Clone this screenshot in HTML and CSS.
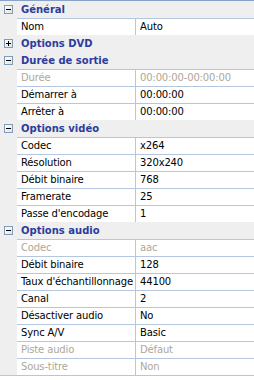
FILE: index.html
```html
<!DOCTYPE html>
<html lang="fr">
<head>
    <meta charset="UTF-8">
    <title>Propriétés</title>
    <link rel="stylesheet" href="styles.css">
</head>
<body>
    <div class="grid">
        <div class="cat">
            <div class="gutter"><span class="toggle minus"></span></div>
            <div class="cat-name">Général</div>
        </div>
        <div class="prop">
            <div class="gutter"></div>
            <div class="name">Nom</div>
            <div class="value">Auto</div>
        </div>

        <div class="cat">
            <div class="gutter"><span class="toggle plus"></span></div>
            <div class="cat-name">Options DVD</div>
        </div>

        <div class="cat">
            <div class="gutter"><span class="toggle minus"></span></div>
            <div class="cat-name">Durée de sortie</div>
        </div>
        <div class="prop off">
            <div class="gutter"></div>
            <div class="name">Durée</div>
            <div class="value">00:00:00-00:00:00</div>
        </div>
        <div class="prop">
            <div class="gutter"></div>
            <div class="name">Démarrer à</div>
            <div class="value">00:00:00</div>
        </div>
        <div class="prop">
            <div class="gutter"></div>
            <div class="name">Arrêter à</div>
            <div class="value">00:00:00</div>
        </div>

        <div class="cat">
            <div class="gutter"><span class="toggle minus"></span></div>
            <div class="cat-name">Options vidéo</div>
        </div>
        <div class="prop">
            <div class="gutter"></div>
            <div class="name">Codec</div>
            <div class="value">x264</div>
        </div>
        <div class="prop">
            <div class="gutter"></div>
            <div class="name">Résolution</div>
            <div class="value">320x240</div>
        </div>
        <div class="prop">
            <div class="gutter"></div>
            <div class="name">Débit binaire</div>
            <div class="value">768</div>
        </div>
        <div class="prop">
            <div class="gutter"></div>
            <div class="name">Framerate</div>
            <div class="value">25</div>
        </div>
        <div class="prop">
            <div class="gutter"></div>
            <div class="name">Passe d'encodage</div>
            <div class="value">1</div>
        </div>

        <div class="cat">
            <div class="gutter"><span class="toggle minus"></span></div>
            <div class="cat-name">Options audio</div>
        </div>
        <div class="prop off">
            <div class="gutter"></div>
            <div class="name">Codec</div>
            <div class="value">aac</div>
        </div>
        <div class="prop">
            <div class="gutter"></div>
            <div class="name">Débit binaire</div>
            <div class="value">128</div>
        </div>
        <div class="prop">
            <div class="gutter"></div>
            <div class="name">Taux d'échantillonnage</div>
            <div class="value">44100</div>
        </div>
        <div class="prop">
            <div class="gutter"></div>
            <div class="name">Canal</div>
            <div class="value">2</div>
        </div>
        <div class="prop">
            <div class="gutter"></div>
            <div class="name">Désactiver audio</div>
            <div class="value">No</div>
        </div>
        <div class="prop">
            <div class="gutter"></div>
            <div class="name">Sync A/V</div>
            <div class="value">Basic</div>
        </div>
        <div class="prop off">
            <div class="gutter"></div>
            <div class="name">Piste audio</div>
            <div class="value">Défaut</div>
        </div>
        <div class="prop off">
            <div class="gutter"></div>
            <div class="name">Sous-titre</div>
            <div class="value">Non</div>
        </div>
    </div>
</body>
</html>
```

FILE: styles.css
```css
body {
    margin: 0;
    padding: 0;
    background-color: #ffffff;
    font-family: "DejaVu Sans", Verdana, sans-serif;
    font-size: 10px;
    letter-spacing: -0.15px;
    color: #000000;
}
.grid {
    width: 254px;
    border-top: 1px solid #8aa2c8;
    border-bottom: 1px solid #b4c6e0;
    background-color: #efefef;
}
.cat,
.prop {
    display: flex;
    height: 17px;
    box-sizing: border-box;
}
.gutter {
    width: 17px;
    flex: none;
    position: relative;
}
.cat-name {
    padding-left: 4px;
    line-height: 17px;
    font-size: 10px;
    letter-spacing: 0;
    font-weight: bold;
    color: #2b3d9d;
}
.prop .name,
.prop .value {
    background-color: #ffffff;
    border-top: 1px solid #b4c6e0;
    line-height: 16px;
    white-space: nowrap;
    overflow: hidden;
}
.prop .name {
    width: 119px;
    flex: none;
    padding-left: 4px;
    box-sizing: border-box;
    border-right: 1px solid #b4c6e0;
}
.prop .value {
    flex: 1;
    padding-left: 4px;
}
.prop.off .name,
.prop.off .value {
    color: #aca899;
}
.toggle {
    position: absolute;
    left: 4px;
    top: 4px;
    width: 9px;
    height: 9px;
    box-sizing: border-box;
    border: 1px solid #7f9db9;
    background: linear-gradient(135deg, #ffffff 0%, #e3e3dc 100%);
}
.toggle::before,
.toggle::after {
    content: "";
    position: absolute;
    background-color: #000000;
}
.toggle::before {
    left: 1px;
    top: 3px;
    width: 5px;
    height: 1px;
}
.toggle.plus::after {
    left: 3px;
    top: 1px;
    width: 1px;
    height: 5px;
}
```
